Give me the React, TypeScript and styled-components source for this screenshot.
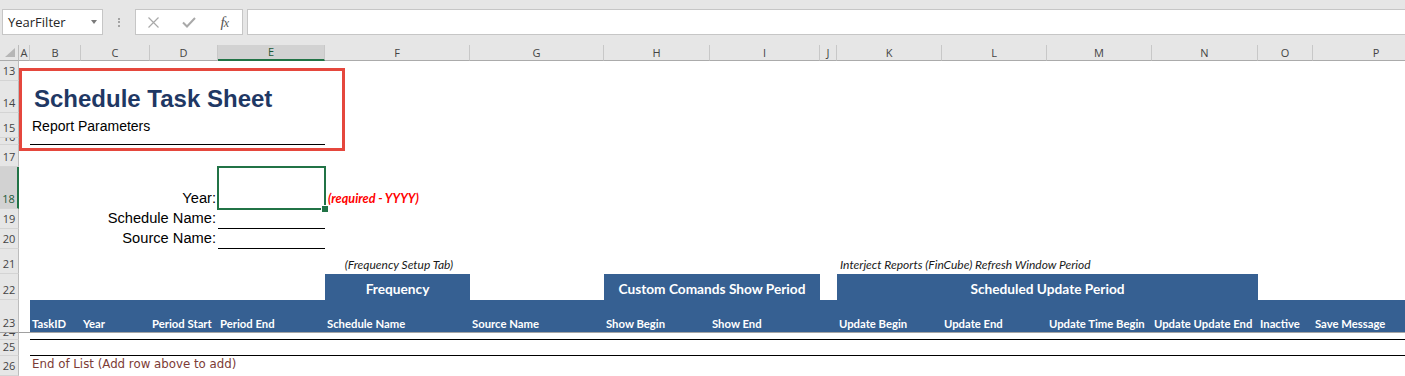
import styled, { createGlobalStyle, css } from "styled-components";

const GlobalStyle = createGlobalStyle`
  html, body {
    margin: 0;
    padding: 0;
    background: #ffffff;
  }
  body {
    overflow: hidden;
    font-family: "Liberation Sans", Arial, sans-serif;
  }
  * {
    box-sizing: border-box;
  }
`;

const COLS = ["A", "B", "C", "D", "E", "F", "G", "H", "I", "J", "K", "L", "M", "N", "O", "P"];
const WIDTHS = [11, 51, 69, 68, 107, 145, 134, 106, 110, 17, 105, 105, 105, 106, 55, 127];
const ROWS: [number, number][] = [
  [13, 20],
  [14, 32],
  [15, 25],
  [16, 7],
  [17, 22],
  [18, 42],
  [19, 20],
  [20, 20],
  [21, 25],
  [22, 26],
  [23, 33],
  [24, 7],
  [25, 16],
  [26, 20],
  [27, 20],
];

const FIELDS = [
  { row: 18, label: "Year:", active: true },
  { row: 19, label: "Schedule Name:" },
  { row: 20, label: "Source Name:" },
];

const LABELS: [string, string][] = [
  ["B", "TaskID"],
  ["C", "Year"],
  ["D", "Period Start"],
  ["E", "Period End"],
  ["F", "Schedule Name"],
  ["G", "Source Name"],
  ["H", "Show Begin"],
  ["I", "Show End"],
  ["J", ""],
  ["K", "Update Begin"],
  ["L", "Update End"],
  ["M", "Update Time Begin"],
  ["N", "Update Update End"],
  ["O", "Inactive"],
  ["P", "Save Message"],
];

const GREEN = "#217346";
const BAND = "#366092";

const line = (c: string) => COLS.indexOf(c) + 2;

type Place = { $c: string; $to?: string; $r: number };

const place = css<Place>`
  grid-column: ${(p) => line(p.$c)} / ${(p) => line(p.$to ?? p.$c) + 1};
  grid-row: ${(p) => p.$r - 11};
`;

const Window = styled.div`
  width: 1405px;
  height: 376px;
  overflow: hidden;
  display: flex;
  flex-direction: column;
  background: #fff;
`;

/* formula bar */

const FormulaBar = styled.div`
  flex: none;
  display: flex;
  align-items: flex-start;
  height: 45px;
  padding: 9px 0 0 2px;
  background: #e6e6e6;
`;

const NameBox = styled.div`
  display: flex;
  align-items: center;
  justify-content: space-between;
  width: 101px;
  height: 26px;
  padding: 0 5px 0 5px;
  background: #fff;
  border: 1px solid #c6c6c6;
  font: 13px "Open Sans", sans-serif;
  color: #262626;
`;

const Caret = styled.span`
  width: 0;
  height: 0;
  border-left: 3.5px solid transparent;
  border-right: 3.5px solid transparent;
  border-top: 4px solid #7a7a7a;
`;

const Grip = styled.div`
  width: 32px;
  height: 26px;
  display: flex;
  flex-direction: column;
  align-items: center;
  justify-content: center;
  gap: 1.5px;

  span {
    width: 2px;
    height: 2px;
    background: #a3a3a3;
  }
`;

const FxBox = styled.div`
  width: 108px;
  height: 26px;
  display: grid;
  grid-template-columns: repeat(3, 1fr);
  align-items: center;
  justify-items: center;
  background: #fff;
  border: 1px solid #c6c6c6;
`;

const Fx = styled.span`
  font: italic 15px "Liberation Serif", serif;
  color: #555;
  letter-spacing: -1px;

  small {
    font-size: 12px;
  }
`;

const FormulaInput = styled.div`
  flex: 1;
  height: 26px;
  margin: 0 -6px 0 4px;
  background: #fff;
  border: 1px solid #c6c6c6;
`;

/* sheet */

const Sheet = styled.div`
  position: relative;
  display: grid;
  grid-template-columns: 19px ${WIDTHS.map((w) => w + "px").join(" ")};
  grid-template-rows: 16px ${ROWS.map(([, h]) => h + "px").join(" ")};
  width: max-content;
`;

const Corner = styled.div`
  grid-column: 1;
  grid-row: 1;
  display: flex;
  align-items: flex-end;
  justify-content: flex-end;
  padding: 0 3px 3px 0;
  background: #e6e6e6;
  border-right: 1px solid #bcbcbc;
  border-bottom: 1px solid #ababab;
`;

const ColHead = styled.div<{ $on?: boolean }>`
  grid-row: 1;
  display: flex;
  align-items: center;
  justify-content: center;
  overflow: hidden;
  background: ${(p) => (p.$on ? "#d2d2d2" : "#e6e6e6")};
  border-right: 1px solid #c8c8c8;
  border-bottom: ${(p) => (p.$on ? `2px solid ${GREEN}` : "1px solid #ababab")};
  font: 11px/14px "Open Sans", sans-serif;
  color: ${(p) => (p.$on ? "#1d5a39" : "#444")};
`;

const RowHead = styled.div<{ $r: number; $h: number; $on?: boolean; $freeze?: boolean }>`
  grid-column: 1;
  grid-row: ${(p) => p.$r - 11};
  display: flex;
  align-items: flex-end;
  justify-content: center;
  overflow: hidden;
  padding-bottom: ${(p) => (p.$h < 10 ? 0 : p.$h < 18 ? 1 : 2)}px;
  background: ${(p) => (p.$on ? "#d2d2d2" : "#e6e6e6")};
  border-right: ${(p) => (p.$on ? `2px solid ${GREEN}` : "1px solid #bcbcbc")};
  border-bottom: 1px solid ${(p) => (p.$freeze ? "#a0a0a0" : "#d4d4d4")};
  font: 11px/14px "Open Sans", sans-serif;
  color: ${(p) => (p.$on ? "#1d5a39" : "#444")};
`;

const Title = styled.div<Place>`
  ${place};
  display: flex;
  align-items: flex-end;
  padding: 0 0 0 4px;
  white-space: nowrap;
  font: bold 24px/28px "Liberation Sans", Arial, sans-serif;
  color: #1f3864;
`;

const Subtitle = styled.div<Place>`
  ${place};
  display: flex;
  align-items: flex-end;
  padding: 0 0 4px 2px;
  white-space: nowrap;
  font: 14px/16px "Liberation Sans", Arial, sans-serif;
  color: #000;
`;

const Rule = styled.div<Place>`
  ${place};
  border-bottom: 1px solid #000;
`;

const FieldLabel = styled.div<Place>`
  ${place};
  display: flex;
  align-items: flex-end;
  justify-content: flex-end;
  padding: 0 2px 2px 0;
  white-space: nowrap;
  font: 14.67px/17px "Liberation Sans", Arial, sans-serif;
  color: #000;
`;

const FieldInput = styled.div<Place & { $active?: boolean }>`
  ${place};
  position: relative;
  ${(p) =>
    p.$active
      ? css`
          margin: -1px;
          border: 2px solid ${GREEN};
        `
      : css`
          border-bottom: 1px solid #000;
        `}
`;

const FillHandle = styled.span`
  position: absolute;
  right: -4px;
  bottom: -4px;
  width: 6px;
  height: 6px;
  background: ${GREEN};
  box-shadow: -1px -1px 0 0 #fff;
`;

const Hint = styled.div<Place>`
  ${place};
  display: flex;
  align-items: flex-end;
  padding: 0 0 3px 3px;
  white-space: nowrap;
  font: italic bold 12.6px/14px Lato, sans-serif;
  color: #ff0000;
`;

const Caption = styled.div<Place & { $center?: boolean }>`
  ${place};
  display: flex;
  align-items: flex-end;
  justify-content: ${(p) => (p.$center ? "center" : "flex-start")};
  padding: 0 0 2px 3px;
  white-space: nowrap;
  font: italic 12px/14px Lato, sans-serif;
  color: #1a1a1a;
`;

const GroupHead = styled.div<Place>`
  ${place};
  display: flex;
  align-items: flex-end;
  justify-content: center;
  padding-bottom: 3px;
  white-space: nowrap;
  background: ${BAND};
  font: bold 13.7px/16px Lato, sans-serif;
  color: #fff;
`;

const ColLabel = styled.div<Place>`
  ${place};
  display: flex;
  align-items: flex-end;
  padding: 0 0 2px 2px;
  white-space: nowrap;
  overflow: hidden;
  background: ${BAND};
  border-bottom: 1px solid #a6a6a6;
  font: bold 11.3px/13px Lato, sans-serif;
  color: #fff;
`;

const FreezeCell = styled.div<Place>`
  ${place};
  border-bottom: 1px solid #a0a0a0;
`;

const ListLine = styled.div<Place>`
  ${place};
  border-bottom: 1px solid #000;
`;

const EndNote = styled.div<Place>`
  ${place};
  display: flex;
  align-items: flex-end;
  padding: 0 0 4px 2px;
  white-space: nowrap;
  font: 11.8px/15px "DejaVu Sans", sans-serif;
  color: #7c3b36;
`;

const Highlight = styled.div`
  position: absolute;
  left: 19px;
  top: 23px;
  width: 326px;
  height: 83px;
  border: 3px solid #e5473d;
  pointer-events: none;
`;

export default function App() {
  return (
    <>
      <GlobalStyle />
      <Window>
        <FormulaBar>
          <NameBox>
            YearFilter
            <Caret />
          </NameBox>
          <Grip>
            <span />
            <span />
            <span />
          </Grip>
          <FxBox>
            <svg width="11" height="11" viewBox="0 0 11 11">
              <path d="M0.5 0.5L10.5 10.5M10.5 0.5L0.5 10.5" stroke="#a9a9a9" strokeWidth="1.2" />
            </svg>
            <svg width="14" height="11" viewBox="0 0 14 11">
              <path d="M1 5.5L5 9.5L13 1" stroke="#a9a9a9" strokeWidth="2" fill="none" />
            </svg>
            <Fx>
              f<small>x</small>
            </Fx>
          </FxBox>
          <FormulaInput />
        </FormulaBar>

        <Sheet>
          <Corner>
            <svg width="10" height="9" viewBox="0 0 10 9">
              <polygon points="10,0 10,9 0,9" fill="#b6b6b6" />
            </svg>
          </Corner>
          {COLS.map((c) => (
            <ColHead key={c} $on={c === "E"}>
              {c}
            </ColHead>
          ))}
          {ROWS.map(([n, h]) => (
            <RowHead key={n} $r={n} $h={h} $on={n === 18} $freeze={n === 23}>
              {n}
            </RowHead>
          ))}

          <Title $c="B" $to="F" $r={14}>
            Schedule Task Sheet
          </Title>
          <Subtitle $c="B" $to="E" $r={15}>
            Report Parameters
          </Subtitle>
          <Rule $c="B" $to="E" $r={16} />

          {FIELDS.map((f) => (
            <FieldLabel key={"l" + f.row} $c="B" $to="D" $r={f.row}>
              {f.label}
            </FieldLabel>
          ))}
          {FIELDS.map((f) => (
            <FieldInput key={"i" + f.row} $c="E" $r={f.row} $active={f.active}>
              {f.active && <FillHandle />}
            </FieldInput>
          ))}
          <Hint $c="F" $r={18}>
            (required - YYYY)
          </Hint>

          <Caption $c="F" $r={21} $center>
            (Frequency Setup Tab)
          </Caption>
          <Caption $c="K" $to="N" $r={21}>
            Interject Reports (FinCube) Refresh Window Period
          </Caption>

          <GroupHead $c="F" $r={22}>
            Frequency
          </GroupHead>
          <GroupHead $c="H" $to="I" $r={22}>
            Custom Comands Show Period
          </GroupHead>
          <GroupHead $c="K" $to="N" $r={22}>
            Scheduled Update Period
          </GroupHead>

          <FreezeCell $c="A" $r={23} />
          {LABELS.map(([c, text]) => (
            <ColLabel key={c} $c={c} $r={23}>
              {text}
            </ColLabel>
          ))}
          <ListLine $c="B" $to="P" $r={24} />
          <ListLine $c="B" $to="P" $r={25} />

          <EndNote $c="B" $to="F" $r={26}>
            End of List (Add row above to add)
          </EndNote>

          <Highlight />
        </Sheet>
      </Window>
    </>
  );
}
